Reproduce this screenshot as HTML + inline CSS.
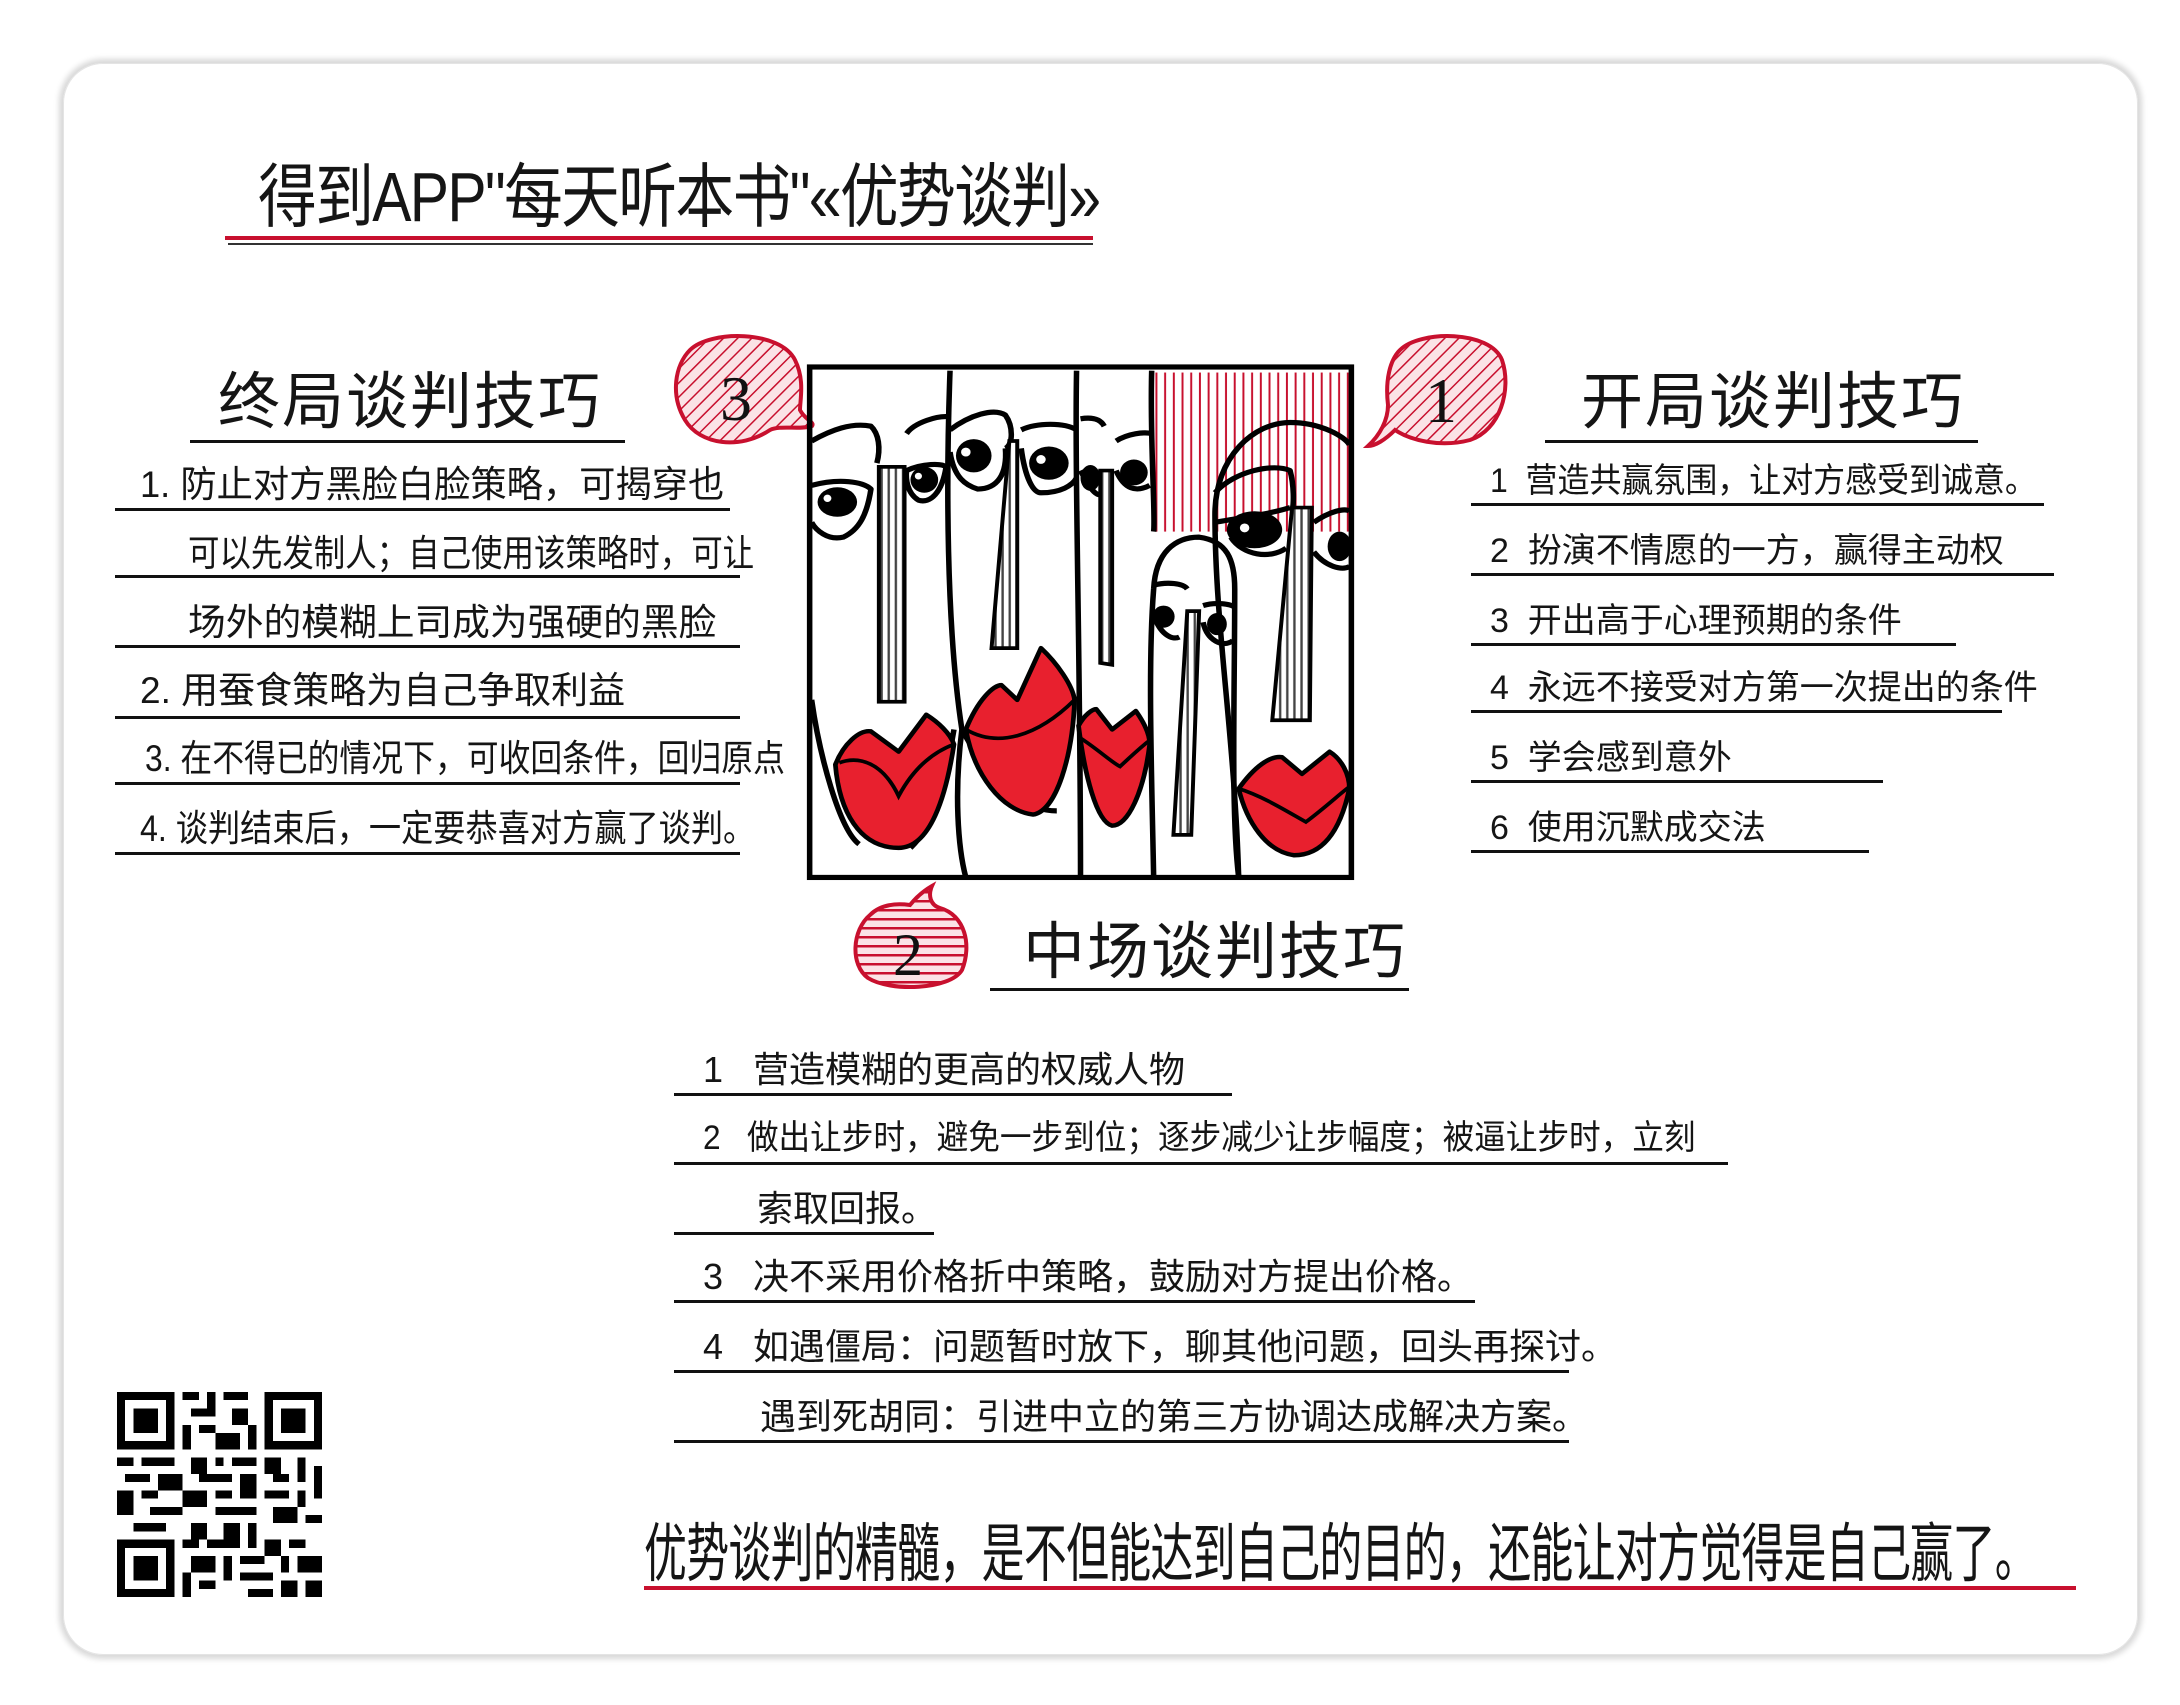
<!DOCTYPE html>
<html><head><meta charset="utf-8">
<style>
html,body{margin:0;padding:0;background:#fff;}
body{width:2180px;height:1705px;position:relative;overflow:hidden;font-family:"Liberation Sans","Noto Sans CJK SC",sans-serif;color:#111;}
.card{position:absolute;left:63px;top:63px;width:2075px;height:1592px;border-radius:40px;background:#fff;box-shadow:0 0 6px 4px #d8d8d8, inset 0 0 0 1px #e4e4e4;}
.t{position:absolute;white-space:nowrap;line-height:1;color:#151515;transform-origin:left top;}
.ln{position:absolute;height:3px;background:#111;}
.rl{position:absolute;height:4px;background:#c8102e;}
</style></head><body>
<div class="card"></div>

<!-- title -->
<div class="t" style="left:258px;top:162px;font-size:70px;letter-spacing:-2px;transform:scaleX(0.84);">得到APP"每天听本书"«优势谈判»</div>
<div class="rl" style="left:225px;top:236px;width:868px;height:4px;"></div>
<div class="rl" style="left:228px;top:243px;width:865px;height:2px;background:#333"></div>

<!-- left heading -->
<div class="t" style="left:218px;top:372px;font-size:62px;letter-spacing:2px;">终局谈判技巧</div>
<div class="ln" style="left:190px;top:440px;width:435px;"></div>

<!-- right heading -->
<div class="t" style="left:1581px;top:372px;font-size:62px;letter-spacing:2px;">开局谈判技巧</div>
<div class="ln" style="left:1545px;top:440px;width:433px;"></div>

<!-- middle heading -->
<div class="t" style="left:1023px;top:922px;font-size:62px;letter-spacing:2px;">中场谈判技巧</div>
<div class="ln" style="left:990px;top:988px;width:419px;"></div>

<!-- left items -->
<div class="t" style="left:140px;top:466px;font-size:37px;transform:scaleX(0.98);">1. 防止对方黑脸白脸策略，可揭穿也</div>
<div class="ln" style="left:115px;top:508px;width:615px;"></div>
<div class="t" style="left:188px;top:535px;font-size:37px;transform:scaleX(0.85);">可以先发制人；自己使用该策略时，可让</div>
<div class="ln" style="left:115px;top:575px;width:625px;"></div>
<div class="t" style="left:188px;top:604px;font-size:37px;transform:scaleX(1.02);">场外的模糊上司成为强硬的黑脸</div>
<div class="ln" style="left:115px;top:645px;width:625px;"></div>
<div class="t" style="left:140px;top:672px;font-size:37px;">2. 用蚕食策略为自己争取利益</div>
<div class="ln" style="left:115px;top:716px;width:625px;"></div>
<div class="t" style="left:145px;top:740px;font-size:37px;transform:scaleX(0.86);">3. 在不得已的情况下，可收回条件，回归原点</div>
<div class="ln" style="left:115px;top:782px;width:625px;"></div>
<div class="t" style="left:140px;top:810px;font-size:37px;transform:scaleX(0.87);">4. 谈判结束后，一定要恭喜对方赢了谈判。</div>
<div class="ln" style="left:115px;top:852px;width:625px;"></div>

<!-- right items -->
<div class="t" style="left:1490px;top:464px;font-size:34px;transform:scaleX(0.94);">1&nbsp;&nbsp;营造共赢氛围，让对方感受到诚意。</div>
<div class="ln" style="left:1471px;top:503px;width:573px;"></div>
<div class="t" style="left:1490px;top:534px;font-size:34px;">2&nbsp;&nbsp;扮演不情愿的一方，赢得主动权</div>
<div class="ln" style="left:1471px;top:573px;width:583px;"></div>
<div class="t" style="left:1490px;top:604px;font-size:34px;">3&nbsp;&nbsp;开出高于心理预期的条件</div>
<div class="ln" style="left:1471px;top:643px;width:485px;"></div>
<div class="t" style="left:1490px;top:671px;font-size:34px;">4&nbsp;&nbsp;永远不接受对方第一次提出的条件</div>
<div class="ln" style="left:1471px;top:710px;width:531px;"></div>
<div class="t" style="left:1490px;top:741px;font-size:34px;">5&nbsp;&nbsp;学会感到意外</div>
<div class="ln" style="left:1471px;top:780px;width:412px;"></div>
<div class="t" style="left:1490px;top:811px;font-size:34px;">6&nbsp;&nbsp;使用沉默成交法</div>
<div class="ln" style="left:1471px;top:850px;width:398px;"></div>

<!-- middle items -->
<div class="t" style="left:703px;top:1052px;font-size:36px;">1&nbsp;&nbsp;&nbsp;营造模糊的更高的权威人物</div>
<div class="ln" style="left:674px;top:1093px;width:558px;"></div>
<div class="t" style="left:703px;top:1121px;font-size:34px;transform:scaleX(0.93);">2&nbsp;&nbsp;&nbsp;做出让步时，避免一步到位；逐步减少让步幅度；被逼让步时，立刻</div>
<div class="ln" style="left:674px;top:1162px;width:1054px;"></div>
<div class="t" style="left:757px;top:1191px;font-size:36px;">索取回报。</div>
<div class="ln" style="left:674px;top:1232px;width:260px;"></div>
<div class="t" style="left:703px;top:1259px;font-size:36px;">3&nbsp;&nbsp;&nbsp;决不采用价格折中策略，鼓励对方提出价格。</div>
<div class="ln" style="left:674px;top:1300px;width:801px;"></div>
<div class="t" style="left:703px;top:1329px;font-size:36px;">4&nbsp;&nbsp;&nbsp;如遇僵局：问题暂时放下，聊其他问题，回头再探讨。</div>
<div class="ln" style="left:674px;top:1370px;width:895px;"></div>
<div class="t" style="left:760px;top:1399px;font-size:36px;">遇到死胡同：引进中立的第三方协调达成解决方案。</div>
<div class="ln" style="left:674px;top:1440px;width:895px;"></div>

<!-- bottom sentence -->
<div class="t" style="left:644px;top:1522px;font-size:64px;letter-spacing:-1px;transform:scaleX(0.67);">优势谈判的精髓，是不但能达到自己的目的，还能让对方觉得是自己赢了。</div>
<div class="rl" style="left:644px;top:1586px;width:1432px;"></div>

<!-- bubbles -->
<svg style="position:absolute;left:0;top:0" width="2180" height="1705">
<defs>
<pattern id="hatch" width="10" height="10" patternUnits="userSpaceOnUse" patternTransform="rotate(45)">
<rect width="10" height="10" fill="#fbe3e6"/><line x1="0" y1="0" x2="0" y2="10" stroke="#c8102e" stroke-width="3"/>
</pattern>
<pattern id="hz" width="10" height="9" patternUnits="userSpaceOnUse">
<rect width="10" height="9" fill="#fbe3e6"/><line x1="0" y1="1" x2="10" y2="1" stroke="#c8102e" stroke-width="3"/>
</pattern>
</defs>
<path d="M690,350 C710,330 780,330 795,360 C805,380 800,400 800,410 C805,420 815,422 812,426 C800,430 780,425 770,430 C740,450 700,445 685,420 C670,395 675,365 690,350 Z" fill="url(#hatch)" stroke="#c8102e" stroke-width="4"/>
<text x="720" y="420" font-size="64" font-family="Liberation Serif, serif" fill="#111">3</text>
<path d="M1400,350 C1420,330 1490,330 1502,360 C1512,390 1500,430 1470,440 C1440,448 1410,440 1395,430 C1385,440 1375,446 1368,446 C1380,435 1388,420 1388,405 C1385,380 1390,360 1400,350 Z" fill="url(#hatch)" stroke="#c8102e" stroke-width="4"/>
<text x="1425" y="422" font-size="64" font-family="Liberation Serif, serif" fill="#111">1</text>
<path d="M870,915 C880,905 895,903 910,905 C918,895 925,890 932,886 C928,895 930,905 940,908 C965,915 972,945 962,970 C950,990 890,992 868,978 C850,965 852,930 870,915 Z" fill="url(#hz)" stroke="#c8102e" stroke-width="4"/>
<text x="893" y="975" font-size="60" font-family="Liberation Serif, serif" fill="#111">2</text>
</svg>

<!-- face picture -->
<svg style="position:absolute;left:780px;top:330px" width="620" height="580" viewBox="0 0 1568 1568" preserveAspectRatio="none">
<defs>
<pattern id="vs" width="22" height="10" patternUnits="userSpaceOnUse"><rect width="22" height="10" fill="#fff"/><line x1="6" y1="0" x2="6" y2="10" stroke="#c8102e" stroke-width="5"/></pattern>
<pattern id="gs" width="18" height="10" patternUnits="userSpaceOnUse"><rect width="18" height="10" fill="#fff"/><line x1="5" y1="0" x2="5" y2="10" stroke="#444" stroke-width="6"/></pattern>
</defs>
<rect x="945" y="115" width="495" height="430" fill="url(#vs)"/>
<g fill="none" stroke="#000" stroke-width="14" stroke-linejoin="round">
<path d="M430,110 C420,400 420,800 460,1080 C440,1250 450,1400 470,1480"/>
<path d="M750,110 C745,400 760,900 760,1480"/>
<path d="M940,110 C935,300 950,500 945,545"/>
<path d="M80,300 C130,270 180,250 230,260 C250,280 255,320 245,360"/>
<path d="M80,420 C150,400 210,410 230,430 C220,500 200,540 160,560 C120,570 90,540 80,520"/>
<path d="M320,280 C340,250 400,230 430,235"/>
<path d="M320,380 C360,360 410,360 420,370 C410,440 380,470 350,460 C320,440 318,400 320,380"/>
<path d="M80,1000 C100,1150 150,1350 200,1390"/>
<path d="M440,1080 C420,1200 400,1330 330,1400"/>
<path d="M430,270 C480,230 540,210 570,230 C590,260 590,310 570,320 M430,330 C440,400 470,420 500,430 C550,430 575,390 570,320"/>
<path d="M610,270 C650,250 720,250 750,270 M610,320 C620,400 640,440 660,440 C710,440 740,420 750,400"/>
<path d="M460,1080 C520,1200 600,1300 700,1300"/>
<path d="M760,240 C790,235 810,240 820,260 M760,380 C780,420 800,460 820,440"/>
<path d="M850,300 C880,280 920,275 940,280 M850,380 C870,430 900,440 935,420"/>
<path d="M945,1480 C940,1200 930,900 945,700 C950,600 1000,560 1060,560 C1130,570 1150,620 1150,700 C1150,1000 1140,1300 1160,1480"/>
<path d="M945,690 C980,680 1020,685 1030,700 M945,770 C960,820 990,840 1010,830"/>
<path d="M1070,745 C1100,735 1140,740 1150,750 M1070,790 C1080,840 1120,860 1145,840"/>
<path d="M1160,1480 C1150,1100 1100,800 1100,500 C1100,340 1200,250 1290,250 C1370,250 1430,290 1440,310"/>
<path d="M1100,440 C1150,380 1250,360 1290,380 C1300,420 1300,470 1295,490"/>
<path d="M1100,520 C1150,510 1230,500 1290,480 M1140,560 C1170,610 1240,620 1280,590"/>
<path d="M1350,520 C1390,490 1430,480 1440,490 M1350,600 C1380,640 1420,650 1440,640"/>
</g>
<rect x="250" y="370" width="65" height="635" fill="url(#gs)" stroke="#000" stroke-width="10"/>
<path d="M580,300 L600,300 L600,860 L535,860 Z" fill="url(#gs)" stroke="#000" stroke-width="10"/>
<path d="M810,380 L840,380 L840,905 L810,900 Z" fill="url(#gs)" stroke="#000" stroke-width="10"/>
<path d="M1030,760 L1060,760 L1040,1365 L995,1365 Z" fill="url(#gs)" stroke="#000" stroke-width="10"/>
<path d="M1295,480 L1345,480 L1340,1055 L1245,1055 Z" fill="url(#gs)" stroke="#000" stroke-width="10"/>
<g fill="#000">
<ellipse cx="145" cy="465" rx="50" ry="40"/><ellipse cx="365" cy="405" rx="35" ry="35"/>
<ellipse cx="490" cy="340" rx="45" ry="45"/><ellipse cx="680" cy="360" rx="50" ry="45"/>
<ellipse cx="785" cy="400" rx="25" ry="35"/><ellipse cx="895" cy="385" rx="35" ry="35"/>
<ellipse cx="970" cy="775" rx="28" ry="30"/><ellipse cx="1105" cy="795" rx="25" ry="30"/>
<ellipse cx="1200" cy="540" rx="70" ry="50"/><ellipse cx="1415" cy="585" rx="30" ry="40"/>
</g>
<g fill="#fff"><circle cx="120" cy="455" r="10"/><circle cx="470" cy="330" r="12"/><circle cx="660" cy="350" r="12"/><circle cx="1175" cy="535" r="12"/><circle cx="350" cy="395" r="9"/></g>
<g fill="#e8202e" stroke="#000" stroke-width="12" stroke-linejoin="round">
<path d="M140,1175 C160,1120 200,1080 230,1085 L300,1140 L370,1040 C400,1060 430,1090 440,1120 C420,1260 380,1400 300,1400 C200,1400 150,1300 140,1175 Z"/>
<path d="M470,1080 C500,1000 540,960 560,960 L600,1000 L660,860 C700,900 740,960 745,1000 C740,1150 700,1300 640,1310 C560,1300 490,1200 470,1080 Z"/>
<path d="M755,1070 C770,1040 790,1025 800,1025 L840,1080 L900,1030 C920,1060 935,1090 935,1120 C920,1250 880,1340 840,1340 C800,1330 770,1200 755,1070 Z"/>
<path d="M1160,1240 C1200,1180 1240,1150 1270,1155 L1320,1200 L1390,1140 C1420,1160 1440,1200 1440,1240 C1420,1340 1380,1420 1300,1420 C1230,1410 1180,1330 1160,1240 Z"/>
</g>
<g fill="none" stroke="#000" stroke-width="10">
<path d="M150,1170 C200,1150 260,1170 300,1260 C340,1180 390,1140 440,1120"/>
<path d="M470,1080 C550,1130 650,1100 745,1000"/>
<path d="M755,1100 C800,1130 840,1170 860,1180 C890,1150 920,1120 935,1110"/>
<path d="M1160,1240 C1220,1260 1280,1300 1330,1330 C1380,1290 1420,1250 1440,1235"/>
</g>
<rect x="75" y="100" width="1370" height="1380" fill="none" stroke="#000" stroke-width="14"/>
</svg>

<!-- QR -->
<svg style="position:absolute;left:117px;top:1392px" width="205" height="205" viewBox="0 0 25 25" shape-rendering="crispEdges">
<g fill="#000"><path d="M0,0h7v7h-7z M18,0h7v7h-7z M0,18h7v7h-7z"/></g>
<g fill="#fff"><path d="M1,1h5v5h-5z M19,1h5v5h-5z M1,19h5v5h-5z"/></g>
<g fill="#000"><path d="M2,2h3v3h-3z M20,2h3v3h-3z M2,20h3v3h-3z"/>
<path d="M8,0h2v1h-2z M11,0h1v2h-1z M13,0h3v1h-3z M9,2h3v1h-3z M14,2h2v2h-2z M8,4h1v3h-1z M10,4h2v1h-2z M12,5h3v2h-3z M16,4h1v3h-1z
M0,8h2v1h-2z M3,8h4v1h-4z M9,8h2v2h-2z M12,8h1v1h-1z M14,8h3v1h-3z M18,8h2v2h-2z M22,8h1v3h-1z
M1,10h3v1h-3z M5,10h3v2h-3z M10,10h4v1h-4z M15,10h2v3h-2z M19,10h2v1h-2z M24,9h1v4h-1z
M0,12h2v3h-2z M3,12h2v1h-2z M8,12h3v2h-3z M12,12h2v1h-2z M18,12h3v1h-3z M22,12h1v2h-1z
M4,14h4v1h-4z M12,14h5v1h-5z M19,14h3v2h-3z M2,16h4v1h-4z M9,16h2v2h-2z M13,16h2v2h-2z M16,16h1v3h-1z M23,15h2v1h-2z
M8,18h2v1h-2z M11,18h4v1h-4z M18,18h2v2h-2z M21,18h2v1h-2z M9,20h3v2h-3z M13,20h1v3h-1z M15,20h3v1h-3z M20,20h1v2h-1z M22,20h3v2h-3z
M8,22h1v3h-1z M10,23h2v1h-2z M15,22h4v1h-4z M16,24h3v1h-3z M20,23h2v2h-2z M23,23h2v2h-2z"/></g>
</svg>
</body></html>
